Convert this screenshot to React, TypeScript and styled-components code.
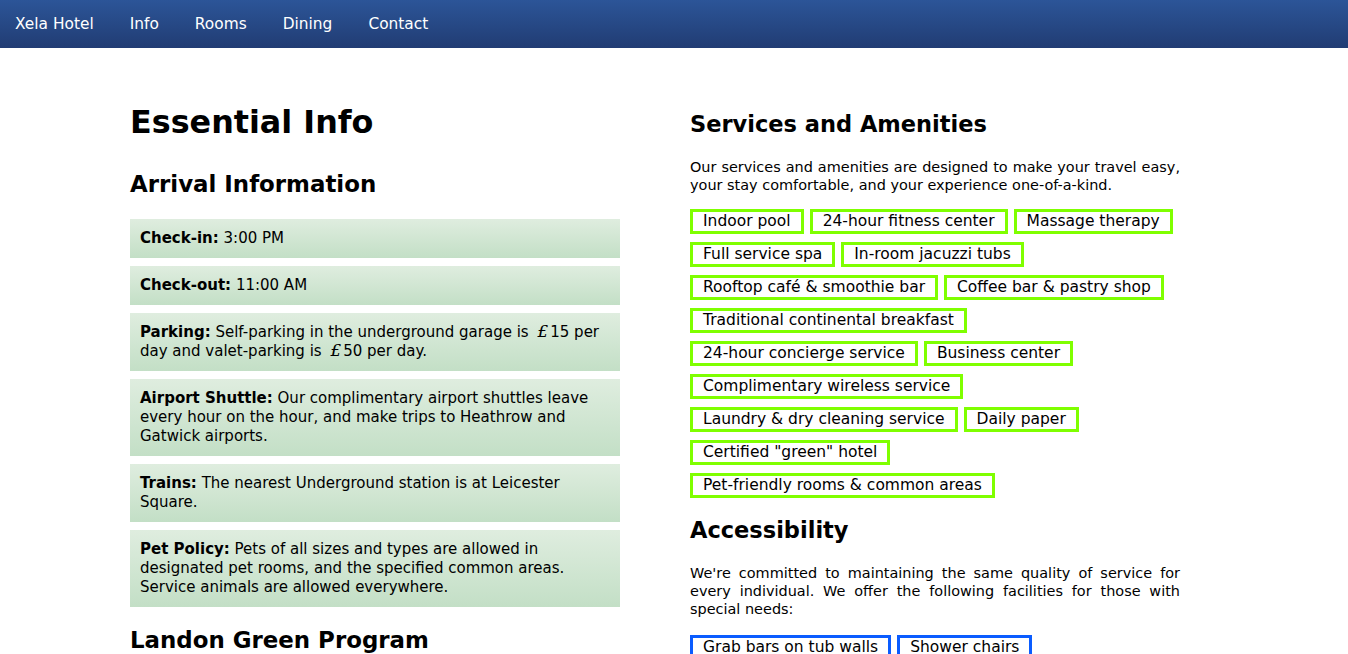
import React from "react";
import styled, { createGlobalStyle } from "styled-components";

const GlobalStyle = createGlobalStyle`
  html, body { margin: 0; padding: 0; background: #ffffff; }
  body {
    font-family: "DejaVu Sans", Verdana, sans-serif;
    color: #000;
  }
  * { box-sizing: border-box; }
`;

const NavBar = styled.nav`
  height: 48px;
  display: flex;
  align-items: center;
  gap: 36px;
  padding-left: 15px;
  background: linear-gradient(to bottom, #2c5598 0%, #213c73 100%);
`;

const NavLink = styled.a`
  color: #ffffff;
  font-size: 15.4px;
  text-decoration: none;
  white-space: nowrap;
`;

const Main = styled.main`
  display: grid;
  grid-template-columns: 490px 490px;
  column-gap: 70px;
  padding: 55px 0 0 130px;
`;

const Column = styled.section<{ $offset?: number }>`
  display: flex;
  flex-direction: column;
  padding-top: ${(p) => p.$offset ?? 0}px;
`;

const PageTitle = styled.h1`
  margin: 0 0 31px;
  font-size: 31.8px;
  font-weight: bold;
  line-height: normal;
`;

const SectionTitle = styled.h2<{ $top?: number; $bottom?: number; $size?: number }>`
  margin: ${(p) => p.$top ?? 0}px 0 ${(p) => p.$bottom ?? 0}px;
  font-size: ${(p) => p.$size ?? 22.5}px;
  font-weight: bold;
  line-height: normal;
`;

const InfoList = styled.div`
  display: flex;
  flex-direction: column;
  gap: 8px;
`;

const InfoBox = styled.div`
  padding: 10px;
  font-size: 15px;
  line-height: 19px;
  background: linear-gradient(to bottom, #dfeddf 0%, #c3dfc6 100%);
`;

const Label = styled.strong`
  font-weight: bold;
`;

const Pound = styled.span`
  font-family: "DejaVu Serif", serif;
  font-style: italic;
  font-size: 17px;
  line-height: 0;
  padding: 0 2px 0 4px;
`;

const Para = styled.p<{ $bottom?: number }>`
  margin: 0 0 ${(p) => p.$bottom ?? 0}px;
  font-size: 14.45px;
  line-height: 18px;
  text-align: justify;
`;

const TagList = styled.ul`
  display: flex;
  flex-wrap: wrap;
  gap: 8px 6px;
  margin: 0;
  padding: 0;
  list-style: none;
`;

const Tag = styled.li<{ $tone: "green" | "blue" }>`
  border: 3px solid ${(p) => (p.$tone === "green" ? "#7fff00" : "#0a5cff")};
  padding: 0 10px;
  font-size: 15.5px;
  line-height: 19px;
  white-space: nowrap;
`;

type Part = string | { pound: string };

const info: { label: string; parts: Part[] }[] = [
  { label: "Check-in:", parts: [" 3:00 PM"] },
  { label: "Check-out:", parts: [" 11:00 AM"] },
  {
    label: "Parking:",
    parts: [
      " Self-parking in the underground garage is ",
      { pound: "£" },
      "15 per day and valet-parking is ",
      { pound: "£" },
      "50 per day.",
    ],
  },
  {
    label: "Airport Shuttle:",
    parts: [
      " Our complimentary airport shuttles leave every hour on the hour, and make trips to Heathrow and Gatwick airports.",
    ],
  },
  {
    label: "Trains:",
    parts: [" The nearest Underground station is at Leicester Square."],
  },
  {
    label: "Pet Policy:",
    parts: [
      " Pets of all sizes and types are allowed in designated pet rooms, and the specified common areas. Service animals are allowed everywhere.",
    ],
  },
];

const amenities = [
  "Indoor pool",
  "24-hour fitness center",
  "Massage therapy",
  "Full service spa",
  "In-room jacuzzi tubs",
  "Rooftop café & smoothie bar",
  "Coffee bar & pastry shop",
  "Traditional continental breakfast",
  "24-hour concierge service",
  "Business center",
  "Complimentary wireless service",
  "Laundry & dry cleaning service",
  "Daily paper",
  'Certified "green" hotel',
  "Pet-friendly rooms & common areas",
];

const accessibility = ["Grab bars on tub walls", "Shower chairs"];

export default function App() {
  return (
    <>
      <GlobalStyle />
      <NavBar>
        <NavLink href="#">Xela Hotel</NavLink>
        <NavLink href="#">Info</NavLink>
        <NavLink href="#">Rooms</NavLink>
        <NavLink href="#">Dining</NavLink>
        <NavLink href="#">Contact</NavLink>
      </NavBar>
      <Main>
        <Column>
          <PageTitle>Essential Info</PageTitle>
          <SectionTitle $bottom={22} $size={22.9}>
            Arrival Information
          </SectionTitle>
          <InfoList>
            {info.map((item) => (
              <InfoBox key={item.label}>
                <Label>{item.label}</Label>
                {item.parts.map((p, i) =>
                  typeof p === "string" ? (
                    <React.Fragment key={i}>{p}</React.Fragment>
                  ) : (
                    <Pound key={i}>{p.pound}</Pound>
                  )
                )}
              </InfoBox>
            ))}
          </InfoList>
          <SectionTitle $top={20} $size={22.9}>
            Landon Green Program
          </SectionTitle>
        </Column>
        <Column $offset={8}>
          <SectionTitle $bottom={21}>Services and Amenities</SectionTitle>
          <Para $bottom={15}>
            Our services and amenities are designed to make your travel easy,
            your stay comfortable, and your experience one-of-a-kind.
          </Para>
          <TagList>
            {amenities.map((a) => (
              <Tag key={a} $tone="green">
                {a}
              </Tag>
            ))}
          </TagList>
          <SectionTitle $top={19} $bottom={21}>
            Accessibility
          </SectionTitle>
          <Para $bottom={17}>
            We're committed to maintaining the same quality of service for
            every individual. We offer the following facilities for those with
            special needs:
          </Para>
          <TagList>
            {accessibility.map((a) => (
              <Tag key={a} $tone="blue">
                {a}
              </Tag>
            ))}
          </TagList>
        </Column>
      </Main>
    </>
  );
}
